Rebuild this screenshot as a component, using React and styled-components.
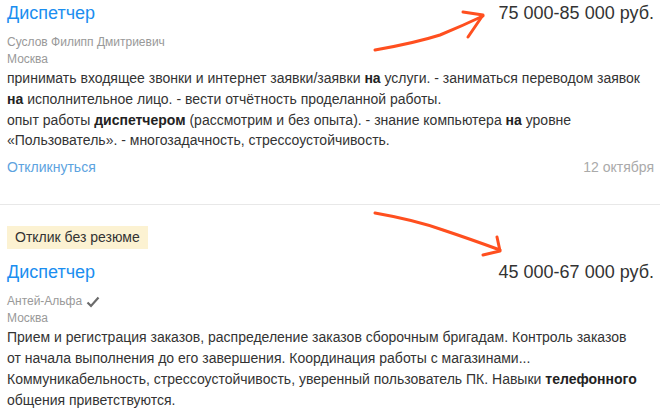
import React from 'react'
import styled, { createGlobalStyle } from 'styled-components'

const GlobalStyle = createGlobalStyle`
  html, body {
    margin: 0;
    padding: 0;
    background: #fff;
  }
  body {
    font-family: "Liberation Sans", Arial, sans-serif;
    color: #333;
  }
`

const vacancies = [
  {
    title: 'Диспетчер',
    salary: '75 000-85 000 руб.',
    company: 'Суслов Филипп Дмитриевич',
    city: 'Москва',
    lines: [
      <>принимать входящее звонки и интернет заявки/заявки <b>на</b> услуги. - заниматься переводом заявок</>,
      <><b>на</b> исполнительное лицо. - вести отчётность проделанной работы.</>,
      <>опыт работы <b>диспетчером</b> (рассмотрим и без опыта). - знание компьютера <b>на</b> уровне</>,
      <>«Пользователь». - многозадачность, стрессоустойчивость.</>,
    ],
    respond: true,
    date: '12 октября',
  },
  {
    badge: 'Отклик без резюме',
    title: 'Диспетчер',
    salary: '45 000-67 000 руб.',
    company: 'Антей-Альфа',
    verified: true,
    city: 'Москва',
    lines: [
      <>Прием и регистрация заказов, распределение заказов сборочным бригадам. Контроль заказов</>,
      <>от начала выполнения до его завершения. Координация работы с магазинами...</>,
      <>Коммуникабельность, стрессоустойчивость, уверенный пользователь ПК. Навыки <b>телефонного</b></>,
      <>общения приветствуются.</>,
    ],
  },
]

function CheckIcon() {
  return (
    <svg width="14" height="12" viewBox="0 0 14 12">
      <polyline points="1.5,6.5 5,10 12.5,1.5" fill="none" stroke="#6b6b6b" strokeWidth="2.2" />
    </svg>
  )
}

function Arrows() {
  return (
    <Overlay width="660" height="420" viewBox="0 0 660 420">
      <g fill="none" stroke="#ff4f1f" strokeWidth="3" strokeLinecap="round" strokeLinejoin="round">
        <path d="M375 50 Q415 43 440 35 Q462 26 483 16" />
        <path d="M463 12 L483 15 L468 37" />
        <path d="M375 213 Q415 220 443 230 Q470 239 500 250" />
        <path d="M497 237 L500 251 L483 255" />
      </g>
    </Overlay>
  )
}

function Vacancy({ v, last }) {
  return (
    <Item last={last}>
      {v.badge && <Badge>{v.badge}</Badge>}
      <Head>
        <Title href="#">{v.title}</Title>
        <Salary>{v.salary}</Salary>
      </Head>
      <Meta>
        <Company>
          {v.company}
          {v.verified && <CheckIcon />}
        </Company>
        <div>{v.city}</div>
      </Meta>
      <Description>
        {v.lines.map((l, i) => (
          <div key={i}>{l}</div>
        ))}
      </Description>
      {v.respond && (
        <Footer>
          <Respond href="#">Откликнуться</Respond>
          <DateText>{v.date}</DateText>
        </Footer>
      )}
    </Item>
  )
}

export default function App() {
  return (
    <Page>
      <GlobalStyle />
      {vacancies.map((v, i) => (
        <Vacancy key={i} v={v} last={i === vacancies.length - 1} />
      ))}
      <Arrows />
    </Page>
  )
}

const Page = styled.div`
  position: relative;
  width: 660px;
  height: 420px;
  overflow: hidden;
`

const Item = styled.div`
  padding: 1px 6px 27px 7px;
  border-bottom: ${p => (p.last ? 'none' : '1px solid #e8e8e8')};
  & + & {
    padding-top: 21px;
  }
`

const Badge = styled.div`
  display: inline-block;
  background: #fcf2d2;
  color: #333;
  font-size: 14px;
  line-height: 23px;
  padding: 0 8px 0 8px;
  margin-bottom: 11px;
`

const Head = styled.div`
  display: flex;
  justify-content: space-between;
  align-items: baseline;
  font-size: 18px;
  line-height: 24px;
`

const Title = styled.a`
  color: #1b8ef0;
  text-decoration: none;
`

const Salary = styled.div`
  color: #333;
`

const Meta = styled.div`
  margin-top: 9px;
  font-size: 12px;
  line-height: 17px;
  color: #999;
`

const Company = styled.div`
  display: flex;
  align-items: center;
  gap: 4px;
`

const Description = styled.div`
  font-size: 14px;
  line-height: 20.8px;
  color: #333;
  white-space: nowrap;

  b {
    color: #222;
  }
`

const Footer = styled.div`
  display: flex;
  justify-content: space-between;
  margin-top: 6px;
  font-size: 14px;
  line-height: 20px;
`

const Respond = styled.a`
  color: #5da3e0;
  text-decoration: none;
`

const DateText = styled.span`
  color: #aaa;
`

const Overlay = styled.svg`
  position: absolute;
  left: 0;
  top: 0;
  pointer-events: none;
`
